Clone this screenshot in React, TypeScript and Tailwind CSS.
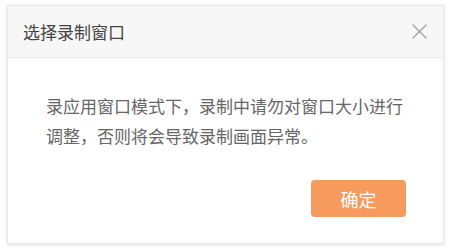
export default function App() {
  return (
    <div
      className="w-[450px] h-[250px] bg-white pt-[5px] pl-[7px]"
      style={{ fontFamily: '"Microsoft YaHei", "Noto Sans CJK SC", "Noto Sans", sans-serif' }}
    >
      <div className="w-[437px] h-[239px] bg-white border border-[#e6e6e6] shadow-[0_1px_4px_rgba(0,0,0,0.12)] flex flex-col">
        <div className="h-[52px] bg-[#f7f7f7] border-b border-[#ebebeb] flex items-center justify-between pl-[15px] pr-[16px] shrink-0">
          <span className="text-[17px] text-[#444444] leading-none">选择录制窗口</span>
          <svg width="15" height="15" viewBox="0 0 15 15" className="text-[#a0a0a0]">
            <path d="M1 1 L14 14 M14 1 L1 14" stroke="currentColor" strokeWidth="1.4" strokeLinecap="round" />
          </svg>
        </div>
        <div className="pl-[38px] pt-[33px]">
          <p className="w-[362px] text-[17px] leading-[30px] text-[#666666]">
            录应用窗口模式下，录制中请勿对窗口大小进行调整，否则将会导致录制画面异常。
          </p>
        </div>
        <div className="flex justify-end pr-[37px] mt-[29px]">
          <button className="w-[95px] h-[37px] rounded-[4px] bg-[#f79a5e] text-white text-[18px] leading-none flex items-center justify-center">
            确定
          </button>
        </div>
      </div>
    </div>
  );
}
